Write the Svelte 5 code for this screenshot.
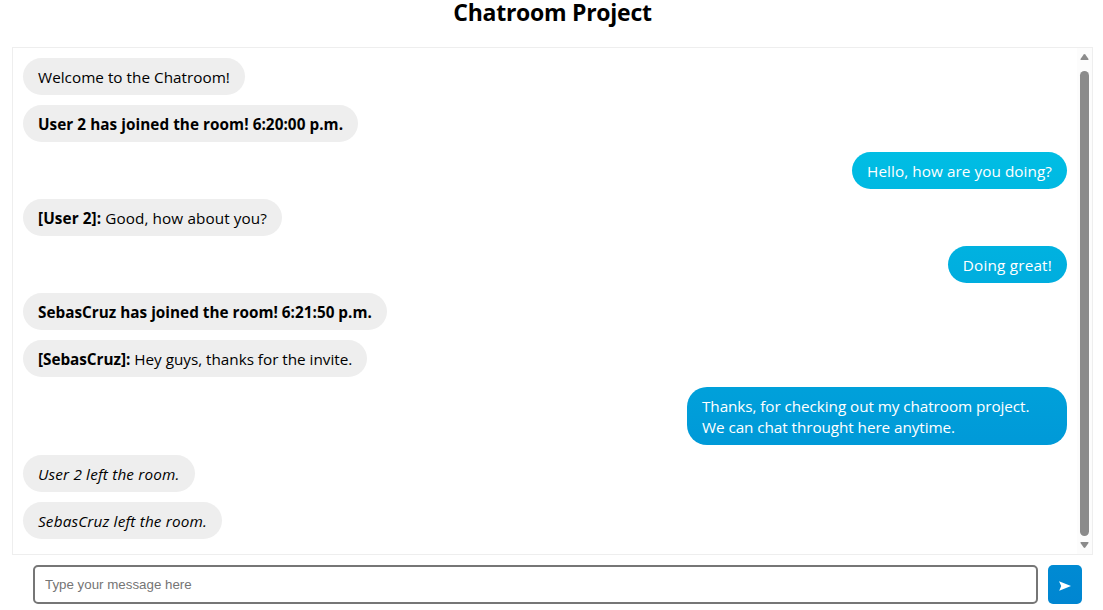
<script>
  const messages = [
    { kind: 'plain', text: 'Welcome to the Chatroom!', spacing: 0.01 },
    { kind: 'joined', text: 'User 2 has joined the room! 6:20:00 p.m.', spacing: 0.05 },
    { kind: 'own', text: 'Hello, how are you doing?', spacing: 0.06 },
    { kind: 'plain', author: '[User 2]:', text: 'Good, how about you?', spacing: 0.09 },
    { kind: 'own', text: 'Doing great!', spacing: 0.19 },
    { kind: 'joined', text: 'SebasCruz has joined the room! 6:21:50 p.m.', spacing: 0.01 },
    { kind: 'plain', author: '[SebasCruz]:', text: 'Hey guys, thanks for the invite.', spacing: -0.03 },
    { kind: 'own wide', text: 'Thanks, for checking out my chatroom project. We can chat throught here anytime.', spacing: -0.08 },
    { kind: 'left', text: 'User 2 left the room.', spacing: 0.16 },
    { kind: 'left', text: 'SebasCruz left the room.', spacing: 0.16 }
  ];
</script>

<main>
  <h1>Chatroom Project</h1>
  <section class="chat">
    <div class="messages">
      {#each messages as m}
        <div class="message {m.kind}" style="letter-spacing: {m.spacing}px">{#if m.author}<b>{m.author}</b>{' '}{/if}{m.text}</div>
      {/each}
    </div>
    <div class="scrollbar">
      <svg width="9" height="8" viewBox="0 0 9 8"><path d="M3.7 1.4 Q4.5 .5 5.3 1.4 L8.5 6 Q8.8 7 8 7 H1 Q.2 7 .5 6Z" fill="#8b8b8b" /></svg>
      <div class="thumb"></div>
      <svg width="9" height="8" viewBox="0 0 9 8"><path d="M3.7 6.6 Q4.5 7.5 5.3 6.6 L8.5 2 Q8.8 1 8 1 H1 Q.2 1 .5 2Z" fill="#8b8b8b" /></svg>
    </div>
  </section>
  <form onsubmit={(e) => e.preventDefault()}>
    <input type="text" placeholder="Type your message here" />
    <button aria-label="Send">
      <svg width="12" height="10" viewBox="0 0 12 10"><path d="M0 .2 L12 5 L.2 9.8 L2.2 5Z" fill="#fff" /></svg>
    </button>
  </form>
</main>

<style>
  :global(body) {
    background: #fff;
    overflow: hidden;
  }
  main {
    box-sizing: border-box;
    height: 610px;
    padding: 0 10px 0 12px;
    display: flex;
    flex-direction: column;
    font-family: 'Open Sans', 'Noto Sans', sans-serif;
    color: #000;
  }
  h1 {
    margin: 0 0 23px;
    height: 24px;
    line-height: 24px;
    font-size: 23px;
    font-weight: 700;
    letter-spacing: -0.27px;
    text-align: center;
  }
  .chat {
    box-sizing: border-box;
    height: 508px;
    border: 1px solid #eee;
    display: flex;
  }
  .messages {
    flex: 1;
    display: flex;
    flex-direction: column;
    align-items: flex-start;
    gap: 10px;
    padding: 10px;
  }
  .message {
    box-sizing: border-box;
    padding: 9px 15px 7px;
    border-radius: 20px;
    background: #eee;
    font-size: 15.3px;
    line-height: 21px;
    white-space: nowrap;
  }
  .joined {
    font-weight: 700;
  }
  .left {
    font-style: italic;
  }
  .own {
    align-self: flex-end;
    color: #fff;
    background: linear-gradient(#00d0ea 0%, #0085d1 100%) fixed;
  }
  .wide {
    width: 380px;
    white-space: normal;
  }
  .scrollbar {
    width: 15px;
    box-sizing: border-box;
    padding: 5px 0;
    background: #fcfcfc;
    display: flex;
    flex-direction: column;
    align-items: center;
  }
  .thumb {
    width: 9px;
    flex: 1;
    margin: 10px 0 5px;
    border-radius: 5px;
    background: #8b8b8b;
  }
  form {
    display: flex;
    gap: 10px;
    padding: 10px 11px 0 21px;
    height: 39px;
  }
  input {
    box-sizing: border-box;
    flex: 1;
    min-width: 0;
    border: 2px solid #767676;
    border-radius: 5px;
    padding: 0 10px;
    background: #fff;
    font: 13.333px 'Liberation Sans', sans-serif;
    outline: 0;
  }
  input::placeholder {
    color: #757575;
  }
  button {
    width: 34px;
    border: 0;
    padding: 2px 0 0;
    border-radius: 5px;
    background: linear-gradient(#00d0ea 0%, #0085d1 100%) fixed;
    display: flex;
    align-items: center;
    justify-content: center;
  }
</style>
